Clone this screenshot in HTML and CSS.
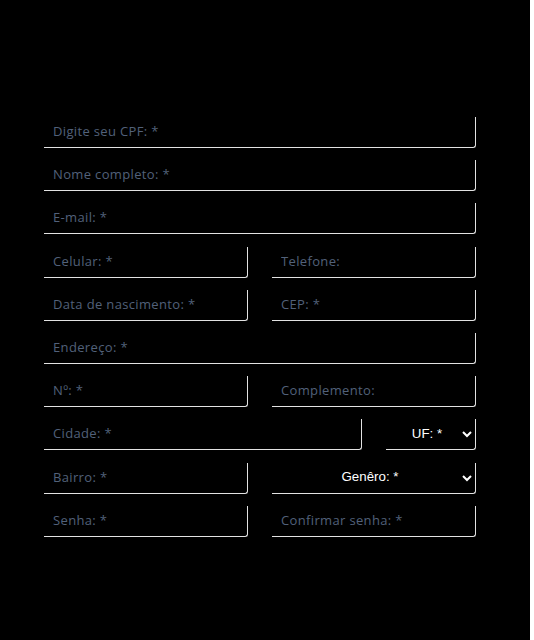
FILE: index.html
```html
<!DOCTYPE html>
<html lang="pt-BR">
<head>
<meta charset="utf-8">
<title>Cadastro</title>
<link rel="stylesheet" href="styles.css">
</head>
<body>
<main class="page">
  <form class="form">
    <input class="field" type="text" placeholder="Digite seu CPF: *">
    <input class="field" type="text" placeholder="Nome completo: *">
    <input class="field" type="email" placeholder="E-mail: *">
    <div class="row">
      <input class="field" type="text" placeholder="Celular: *">
      <input class="field" type="text" placeholder="Telefone:">
    </div>
    <div class="row">
      <input class="field" type="text" placeholder="Data de nascimento: *">
      <input class="field" type="text" placeholder="CEP: *">
    </div>
    <input class="field" type="text" placeholder="Endereço: *">
    <div class="row">
      <input class="field" type="text" placeholder="Nº: *">
      <input class="field" type="text" placeholder="Complemento:">
    </div>
    <div class="row row-city">
      <input class="field" type="text" placeholder="Cidade: *">
      <select class="field select">
        <option>UF: *</option>
      </select>
    </div>
    <div class="row">
      <input class="field" type="text" placeholder="Bairro: *">
      <select class="field select">
        <option>Genêro: *</option>
      </select>
    </div>
    <div class="row">
      <input class="field" type="password" placeholder="Senha: *">
      <input class="field" type="password" placeholder="Confirmar senha: *">
    </div>
  </form>
</main>
</body>
</html>
```

FILE: styles.css
```css
html {
  background: #ffffff;
}
body {
  margin: 0;
  font-family: "Open Sans", "Liberation Sans", sans-serif;
}
.page {
  width: 530px;
  min-height: 640px;
  background: #000000;
  box-sizing: border-box;
  padding: 117px 0 0 44px;
}
.form {
  width: 432px;
  display: flex;
  flex-direction: column;
  gap: 12.2px;
}
.row {
  display: grid;
  grid-template-columns: 1fr 1fr;
  gap: 24px;
}
.row-city {
  grid-template-columns: 318px 90px;
}
.field {
  display: block;
  width: 100%;
  height: 31px;
  box-sizing: border-box;
  margin: 0;
  padding: 0 9px 2px;
  background: transparent;
  border: none;
  border-bottom: 1.5px solid #e2e2e2;
  border-right: 1.5px solid #e2e2e2;
  border-bottom-right-radius: 3px;
  color: #ffffff;
  font-family: "Open Sans", "Liberation Sans", sans-serif;
  font-size: 13px;
  letter-spacing: 0.35px;
  outline: none;
}
.field::placeholder {
  color: #52617a;
  opacity: 1;
}
.select {
  font-family: "Liberation Sans", Arial, sans-serif;
  font-size: 13.33px;
  font-weight: 400;
  letter-spacing: 0;
  color: #ffffff;
  text-align: center;
  text-align-last: center;
  padding: 0 4px 2px 9px;
  color-scheme: dark;
}
.select option {
  background: #000000;
  color: #ffffff;
}
```
